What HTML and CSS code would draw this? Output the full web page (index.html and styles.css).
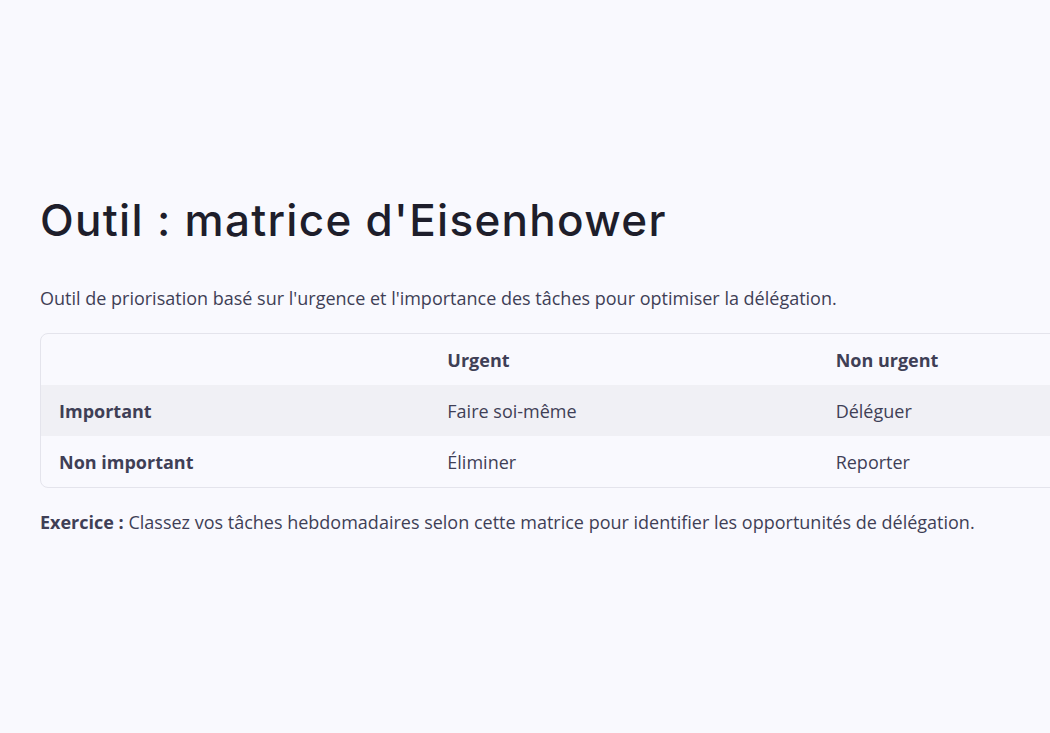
FILE: index.html
```html
<!DOCTYPE html>
<html lang="fr">
<head>
<meta charset="utf-8">
<title>Matrice d'Eisenhower</title>
<link rel="stylesheet" href="styles.css">
</head>
<body>
<main class="page">
  <h1 class="title">Outil : matrice d'Eisenhower</h1>
  <p class="lead">Outil de priorisation basé sur l'urgence et l'importance des tâches pour optimiser la délégation.</p>
  <div class="table-wrap">
    <table class="matrix">
      <thead>
        <tr><th></th><th>Urgent</th><th>Non urgent</th></tr>
      </thead>
      <tbody>
        <tr class="alt"><th>Important</th><td>Faire soi-même</td><td>Déléguer</td></tr>
        <tr><th>Non important</th><td>Éliminer</td><td>Reporter</td></tr>
      </tbody>
    </table>
  </div>
  <p class="exercise"><strong>Exercice :</strong> Classez vos tâches hebdomadaires selon cette matrice pour identifier les opportunités de délégation.</p>
</main>
</body>
</html>
```

FILE: styles.css
```css
html, body {
  margin: 0;
  padding: 0;
  background: #f9f9fe;
}
body {
  font-family: "Open Sans", "Liberation Sans", sans-serif;
  color: #3f3f56;
  overflow: hidden;
}
.page {
  padding: 190px 0 0 40px;
  width: 1167px;
}
.title {
  margin: 0;
  font-family: "Inter", "DejaVu Sans", sans-serif;
  font-weight: 500;
  font-size: 44px;
  line-height: 60px;
  letter-spacing: 1.3px;
  color: #1e1e2b;
}
.lead {
  margin: 35px 0 0;
  font-size: 18px;
  line-height: 26px;
}
.table-wrap {
  margin-top: 22px;
  border: 1px solid #e4e4ec;
  border-radius: 8px;
  overflow: hidden;
}
.matrix {
  width: 100%;
  border-collapse: collapse;
  table-layout: fixed;
  font-size: 18px;
}
.matrix th, .matrix td {
  text-align: left;
  padding: 0 18px;
  height: 51px;
}
.matrix th {
  font-weight: 700;
}
.matrix td {
  font-weight: 400;
}
.matrix .alt {
  background: #f0f0f5;
}
.exercise {
  margin: 21px 0 0;
  font-size: 18px;
  line-height: 26px;
}
.exercise strong {
  font-weight: 700;
}
```
